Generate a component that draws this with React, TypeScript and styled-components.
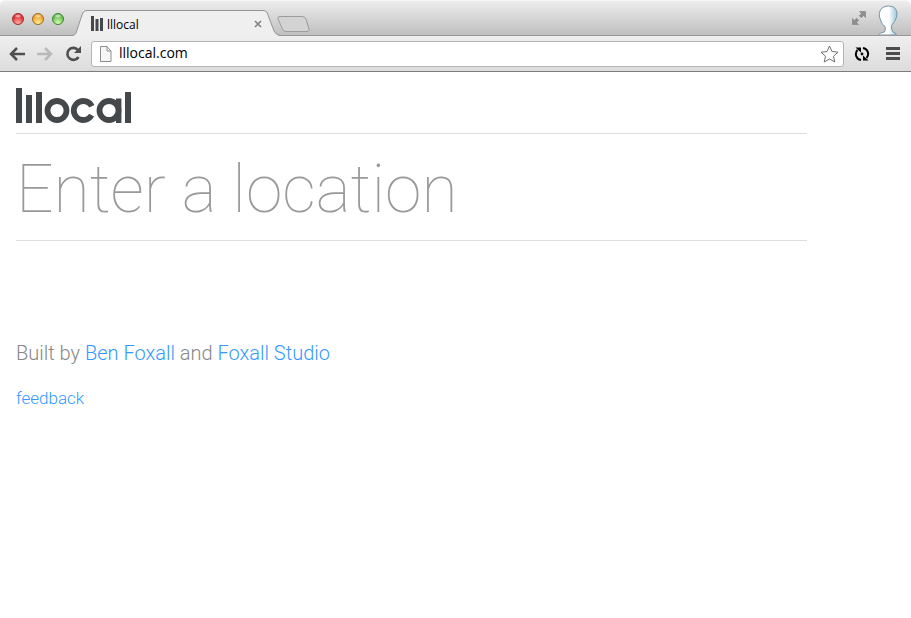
import React from "react";
import styled, { createGlobalStyle } from "styled-components";

const GlobalStyle = createGlobalStyle`
  * { box-sizing: border-box; }
  body { margin: 0; background: #fff; }
`;

const Window = styled.div`
  display: flex;
  flex-direction: column;
  min-height: 100vh;
  font-family: "Roboto", Arial, sans-serif;
  font-weight: 300;
`;

const TabStrip = styled.header`
  display: flex;
  align-items: flex-end;
  height: 36px;
  background: linear-gradient(#ededed, #d8d8d8 45%, #bfbfbf);
  border-top: 1px solid #f6f6f6;
  border-bottom: 1px solid #999;
  border-radius: 5px 5px 0 0;
`;

const TrafficLights = styled.div`
  display: flex;
  align-self: center;
  gap: 8px;
  padding: 2px 0 0 12px;
`;

const LightButton = styled.button<{ $rim: string; $core: string; $glow: string }>`
  width: 12px;
  height: 12px;
  padding: 0;
  border: 1px solid ${(p) => p.$rim};
  border-radius: 50%;
  background:
    radial-gradient(ellipse 4px 2px at 50% 20%, #fffc, #fff0),
    radial-gradient(circle at 50% 90%, ${(p) => p.$glow}, ${(p) => p.$core} 70%);
`;

const Tab = styled.div`
  display: grid;
  width: 208px;
  height: 26px;
  margin: 0 0 -1px 8px;
  > * { grid-area: 1 / 1; }
`;

const TabShape = styled.svg`
  display: block;
`;

const TabContent = styled.div`
  display: flex;
  align-items: center;
  padding: 2px 18px 0 19px;
  font: 12px "Open Sans", sans-serif;
  color: #000;
`;

const TabTitle = styled.span`
  flex: 1;
  padding-left: 4px;
`;

const BareButton = styled.button`
  display: flex;
  align-items: center;
  justify-content: center;
  flex: none;
  padding: 0;
  border: 0;
  background: none;
`;

const StripSpacer = styled.div`
  flex: 1;
`;

const NewTab = styled(BareButton)`
  margin: 0 0 2px -3px;
`;

const FullScreen = styled(BareButton)`
  margin: 0 11px 10px 0;
`;

const Profile = styled(BareButton)`
  margin-right: 12px;
`;

const Toolbar = styled.nav`
  display: flex;
  align-items: center;
  height: 36px;
  padding: 0 11px 0 9px;
  background: linear-gradient(#efefef, #dcdcdc);
  border-bottom: 1px solid #7d7d7d;
`;

const NavButtons = styled.div`
  display: flex;
  gap: 12px;
  margin-right: 9px;
`;

const AddressBar = styled.div`
  display: flex;
  align-items: center;
  flex: 1;
  height: 26px;
  padding: 0 4px 0 7px;
  background: #fff;
  border: 1px solid #b4b4b4;
  border-radius: 3px;
`;

const AddressInput = styled.input`
  flex: 1;
  min-width: 0;
  padding: 0 0 2px 7px;
  border: 0;
  outline: 0;
  background: none;
  color: #000;
  font: 14px "Open Sans", sans-serif;
`;

const ToolButtons = styled.div`
  display: flex;
  gap: 16px;
  margin-left: 10px;
`;

const Page = styled.main`
  flex: 1;
  padding: 16px;
`;

const Panel = styled.section`
  width: 90%;
`;

const LogoLink = styled.a`
  display: block;
  height: 46px;
  border-bottom: 1px solid #ddd;
`;

const LocationInput = styled.input`
  display: block;
  width: 100%;
  height: 107px;
  padding: 4px 0 0;
  border: 0;
  border-bottom: 1px solid #ddd;
  outline: 0;
  background: none;
  color: #444;
  font: 100 66px "Roboto", sans-serif;
  &::placeholder { color: #999; opacity: 1; }
`;

const Credits = styled.p`
  margin: 100px 0 0;
  color: #888;
  font-size: 20px;
  line-height: 24px;
`;

const Feedback = styled.p`
  margin: 23px 0 0;
  font-size: 17px;
  line-height: 20px;
`;

const TextLink = styled.a`
  color: #39f;
  text-decoration: none;
`;

const lights = [
  { label: "Close window", rim: "#9b2a2c", core: "#e0282e", glow: "#ffb0a8" },
  { label: "Minimize window", rim: "#a06a1c", core: "#eda024", glow: "#fff09a" },
  { label: "Zoom window", rim: "#3f8135", core: "#62bb4e", glow: "#d8ffb0" },
];

function Logo() {
  return (
    <svg width="116" height="36" viewBox="0 0 116 36" role="img" aria-label="lllocal" fill="#44484b">
      <rect x="0" y="0" width="6" height="35" />
      <rect x="10" y="7" width="6" height="28" />
      <rect x="20" y="4" width="6" height="31" />
      <g fill="none" stroke="#44484b" strokeWidth="5.800">
        <circle cx="41" cy="22.500" r="9.500" />
        <circle cx="67.300" cy="22.500" r="9.500" strokeDasharray="50 9.700" strokeDashoffset="-4.850" />
        <circle cx="93" cy="22.500" r="9.500" />
      </g>
      <rect x="100" y="10.500" width="5.400" height="24.500" />
      <rect x="109" y="4" width="6" height="31" />
    </svg>
  );
}

export default function App() {
  return (
    <Window>
      <GlobalStyle />
      <TabStrip>
        <TrafficLights>
          {lights.map((l) => (
            <LightButton key={l.label} aria-label={l.label} $rim={l.rim} $core={l.core} $glow={l.glow} />
          ))}
        </TrafficLights>
        <Tab>
          <TabShape width="208" height="26" viewBox="0 0 208 26" aria-hidden="true">
            <path d="M0 26C4 25 4 23 5 20L10 5Q11 1 15 1H191Q195 1 196 5L202 21Q204 25 208 26Z" fill="#efefef" />
            <path d="M0 25.500C4 25 4 23 5 20L10 5Q11 .5 15 .5H191Q195 .5 196 5L202 21Q204 25 208 25.500" fill="none" stroke="#959595" />
          </TabShape>
          <TabContent>
            <svg width="12" height="16" viewBox="0 0 12 16" fill="#44484b" aria-hidden="true">
              <path d="M0 0h3v15H0zM4.500 3h3v12h-3zM9 2h3v13H9z" />
            </svg>
            <TabTitle>lllocal</TabTitle>
            <BareButton aria-label="Close tab">
              <svg width="8" height="8" viewBox="0 0 8 8" stroke="#808080" strokeWidth="1.600">
                <path d="M1 1l6 6M7 1l-6 6" />
              </svg>
            </BareButton>
          </TabContent>
        </Tab>
        <NewTab aria-label="New tab">
          <svg width="33" height="17" viewBox="0 0 33 17">
            <path d="M3 .5H25Q28 .5 29 3L32 13Q33 15.500 30 15.500H9Q6.500 15.500 5.500 13L1 3Q0 .5 3 .5Z" fill="#d3d3d3" stroke="#9c9c9c" />
          </svg>
        </NewTab>
        <StripSpacer />
        <FullScreen aria-label="Full screen">
          <svg width="14" height="14" viewBox="0 0 14 14" fill="#8e8e8e" stroke="#777" strokeWidth="0.500">
            <path d="M7.500 .5H13.500V6.500L11.500 4.500 9.300 6.700 7.300 4.700 9.500 2.500zM.5 7.500L2.500 9.500 4.700 7.300 6.700 9.300 4.500 11.500 6.500 13.500H.5z" />
          </svg>
        </FullScreen>
        <Profile aria-label="Profile">
          <svg width="22" height="30" viewBox="0 0 22 30">
            <defs>
              <linearGradient id="face" x1="0" x2="1">
                <stop offset="0.550" stopColor="#fff" />
                <stop offset="1" stopColor="#9cc6dc" />
              </linearGradient>
            </defs>
            <path d="M1.500 30Q3 27.500 7.500 27Q9 25 8 21.500Q5 20.500 4 16Q1.800 12 2.300 8.500Q3.500 1 11.500 1Q19.500 1 20 8.500Q20 12.500 17.500 16.500L14.500 20.500Q14 24.500 16 27Q18.500 27.500 19.500 30Z" fill="url(#face)" stroke="#7596a8" />
          </svg>
        </Profile>
      </TabStrip>
      <Toolbar>
        <NavButtons>
          <BareButton aria-label="Back">
            <svg width="16" height="14" viewBox="0 0 16 14" fill="none" stroke="#4f4f4f" strokeWidth="2.500">
              <path d="M8 1L2 7l6 6M2.500 7H16" />
            </svg>
          </BareButton>
          <BareButton aria-label="Forward" disabled>
            <svg width="16" height="14" viewBox="0 0 16 14" fill="none" stroke="#b9b9b9" strokeWidth="2.500">
              <path d="M8 1l6 6-6 6M13.500 7H0" />
            </svg>
          </BareButton>
          <BareButton aria-label="Reload">
            <svg width="17" height="16" viewBox="0 0 17 16">
              <path d="M13 4A6 6 0 1 0 13.500 11" fill="none" stroke="#4f4f4f" strokeWidth="2.600" />
              <path d="M16 0v7H9z" fill="#4f4f4f" />
            </svg>
          </BareButton>
        </NavButtons>
        <AddressBar>
          <svg width="13" height="16" viewBox="0 0 13 16" fill="#f6f6f6" stroke="#8d8d8d" aria-hidden="true">
            <path d="M1.500 .5H8L12 5V15.500H1.500ZM8 .5V5H12" />
          </svg>
          <AddressInput aria-label="Address" defaultValue="lllocal.com" />
          <BareButton aria-label="Bookmark this page">
            <svg width="19" height="18" viewBox="0 0 19 18" fill="#fff" stroke="#707070" strokeLinejoin="round">
              <path d="M9.500 1l2.500 5.500 6 .7-4.500 4 1.300 5.800-5.300-3-5.300 3 1.300-5.800L1 7.200l6-.7z" />
            </svg>
          </BareButton>
        </AddressBar>
        <ToolButtons>
          <BareButton aria-label="Sync extension">
            <svg width="16" height="16" viewBox="0 0 16 16">
              <path d="M7 14A6 6 0 0 1 3.500 4M9 2A6 6 0 0 1 12.500 12" fill="none" stroke="#000" strokeWidth="2" />
              <path d="M1.500 1.500H7V6.500zM14.500 14.500H9V9.500z" />
              <circle cx="8" cy="8" r="1.400" />
            </svg>
          </BareButton>
          <BareButton aria-label="Menu">
            <svg width="14" height="13" viewBox="0 0 14 13" fill="#4d4d4d">
              <path d="M0 0h14v3H0zM0 5h14v3H0zM0 10h14v3H0z" />
            </svg>
          </BareButton>
        </ToolButtons>
      </Toolbar>
      <Page>
        <Panel>
          <LogoLink href="/"><Logo /></LogoLink>
          <LocationInput aria-label="Location" placeholder="Enter a location" />
        </Panel>
        <Credits>
          Built by <TextLink href="#ben">Ben Foxall</TextLink> and <TextLink href="#studio">Foxall Studio</TextLink>
        </Credits>
        <Feedback>
          <TextLink href="#feedback">feedback</TextLink>
        </Feedback>
      </Page>
    </Window>
  );
}
